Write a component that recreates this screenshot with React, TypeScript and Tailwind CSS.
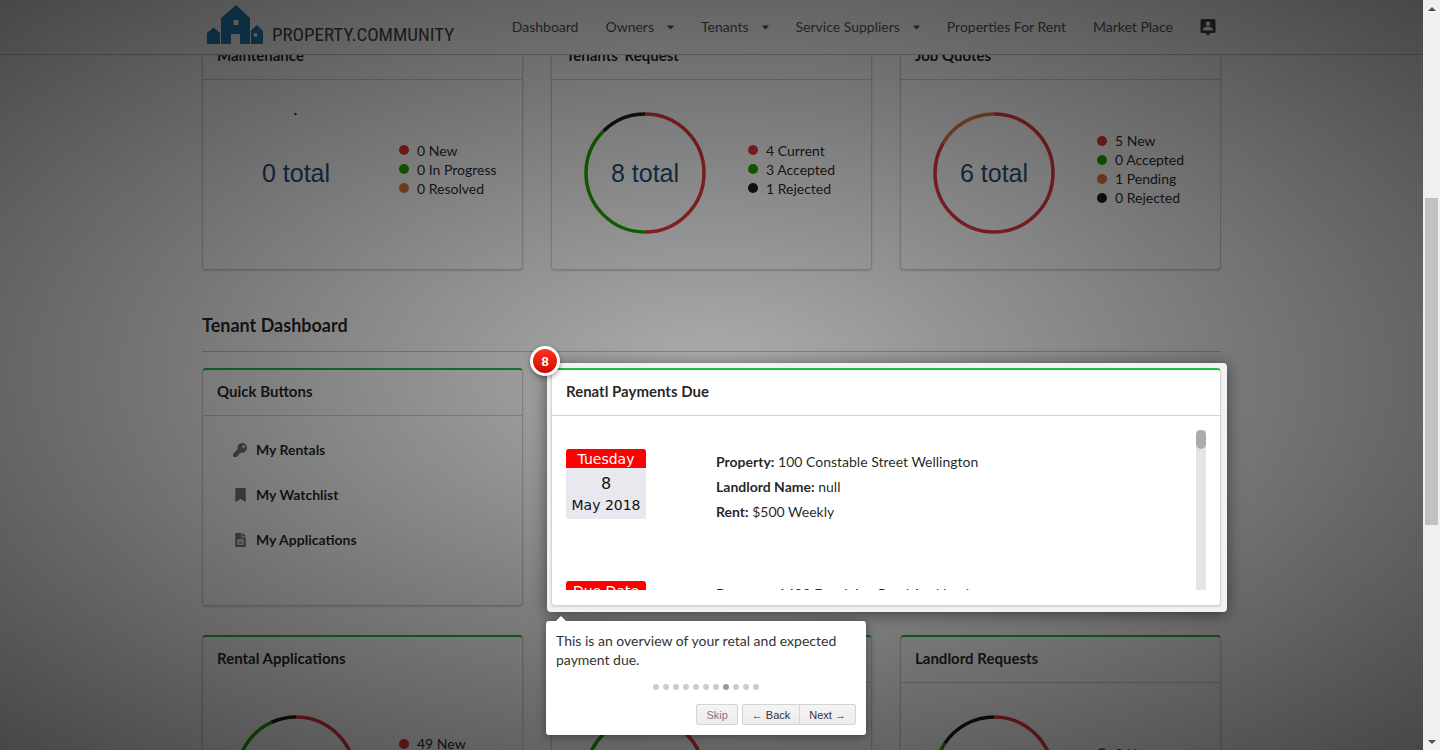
import React from "react";
import { FaKey, FaBookmark, FaCaretDown } from "react-icons/fa";

type Segment = { value: number; color: string };
type LegendItem = { count: number; label: string; color: string };

const RED = "#e0373c";
const GREEN = "#21a300";
const ORANGE = "#d87a3c";
const BLACK = "#1b1c1d";

function Logo() {
  return (
    <a href="#" className="flex items-end gap-2" aria-label="Property Community">
      <svg width="57" height="39" viewBox="0 0 57 39" fill="#2380b8" aria-hidden="true">
        <path
          fillRule="evenodd"
          d="M29 0 14 13v26h10V29h9v10h10V13zM26.500 15v5h5v-5z"
        />
        <path d="M6.500 22.500 0 28v10q0 1 1 1h12V28z" />
        <path fillRule="evenodd" d="M50 20l-6 5.500V39h11q1 0 1-1V26zM48.500 28a2 2 0 1 0 .01 0z" />
      </svg>
      <span className="font-['Liberation_Sans_Narrow','Roboto_Condensed','Liberation_Sans',sans-serif] text-[19px] leading-[18px] text-[#444]">
        PROPERTY.COMMUNITY
      </span>
    </a>
  );
}

const NAV = [
  { label: "Dashboard", menu: false },
  { label: "Owners", menu: true },
  { label: "Tenants", menu: true },
  { label: "Service Suppliers", menu: true },
  { label: "Properties For Rent", menu: false },
  { label: "Market Place", menu: false },
];

function Header() {
  return (
    <header className="absolute inset-x-0 top-0 z-10 h-[55px] border-b border-[#c8c8c9] bg-white">
      <div className="mx-auto flex h-full max-w-[1019px] items-center pl-[5px]">
        <div className="pb-[5px]">
          <Logo />
        </div>
        <nav className="ml-auto flex items-center gap-[27px] pr-[5px] text-[14px] leading-[18px] text-[#555]">
          {NAV.map((item) => (
            <a key={item.label} href="#" className="flex items-center gap-[13px] whitespace-nowrap">
              {item.label}
              {item.menu && <FaCaretDown className="h-3 w-[7px]" />}
            </a>
          ))}
          <button type="button" aria-label="Account" className="text-[#444]">
            <svg width="16" height="18" viewBox="0 0 16 18" fill="currentColor">
              <path
                fillRule="evenodd"
                d="M2 1h12a1.500 1.500 0 0 1 1.500 1.500v11A1.500 1.500 0 0 1 14 15h-3.500L8 17.500 5.500 15H2A1.500 1.500 0 0 1 .500 13.500v-11A1.500 1.500 0 0 1 2 1zM8 3.500a2.300 2.300 0 1 0 .01 0zM3 11.500V12.500h10v-1c0-2-3.300-3-5-3s-5 1-5 3z"
              />
            </svg>
          </button>
        </nav>
      </div>
    </header>
  );
}

function Card({
  title,
  divider = true,
  children,
}: {
  title: string;
  divider?: boolean;
  children: React.ReactNode;
}) {
  return (
    <section className="rounded-[4px] border border-t-2 border-[#d4d4d5] border-t-[#21ba45] bg-white shadow-[0_1px_2px_0_#d4d4d5]">
      <h3
        className={
          "border-b px-[14px] pb-[14px] pt-[11px] text-[15px] font-bold leading-5 " +
          (divider ? "border-[#d4d4d5]" : "border-transparent")
        }
      >
        {title}
      </h3>
      <div className="h-[189px]">{children}</div>
    </section>
  );
}

function Ring({ total, segments }: { total: number; segments: Segment[] }) {
  const r = 59;
  const length = 2 * Math.PI * r;
  const sum = segments.reduce((a, s) => a + s.value, 0);
  let start = 0;
  return (
    <div className="grid h-[122px] w-[122px] shrink-0 place-items-center">
      <svg width="122" height="122" viewBox="0 0 122 122" fill="none" className="col-start-1 row-start-1" aria-hidden="true">
        {sum === 0 && <circle cx="60.500" cy="2" r="1.2" fill="#333" />}
        {segments.map((s) => {
          const part = (s.value / sum) * length;
          const offset = -start;
          start += part;
          return (
            <circle
              key={s.color}
              cx="61"
              cy="61"
              r={r}
              stroke={s.color}
              strokeWidth="3.5"
              strokeDasharray={`${part} ${length - part}`}
              strokeDashoffset={offset}
              transform="rotate(-90 61 61)"
            />
          );
        })}
      </svg>
      <span className="col-start-1 row-start-1 font-['Liberation_Sans',sans-serif] text-[25px] leading-8 text-[#1f4e79]">
        {total} total
      </span>
    </div>
  );
}

function StatCard({
  title,
  total,
  segments,
  legend,
  divider,
}: {
  title: string;
  total: number;
  segments: Segment[];
  legend: LegendItem[];
  divider?: boolean;
}) {
  return (
    <Card title={title} divider={divider}>
      <div className="flex h-full items-center gap-[42px] pb-[3px] pl-8">
        <Ring total={total} segments={segments} />
        <ul className="mb-2 text-[14px] leading-[19px]">
          {legend.map((item) => (
            <li key={item.label} className="flex items-center gap-2 whitespace-nowrap">
              <span className="h-[10px] w-[10px] rounded-full" style={{ backgroundColor: item.color }} />
              {item.count} {item.label}
            </li>
          ))}
        </ul>
      </div>
    </Card>
  );
}

function FileIcon() {
  return (
    <svg width="11" height="14" viewBox="0 0 384 512" fill="currentColor" aria-hidden="true">
      <path
        fillRule="evenodd"
        d="M224 136V0H24C10.700 0 0 10.700 0 24v464c0 13.300 10.700 24 24 24h336c13.300 0 24-10.700 24-24V160H248c-13.200 0-24-10.800-24-24zM80 230h224v200H80zM120 270v40h144v-40zM120 350v40h144v-40zM256 0v128h128v-6c0-6-2.500-12-7-17L279 7c-4.500-4.500-10.600-7-17-7z"
      />
    </svg>
  );
}

function QuickButtons() {
  const items = [
    { label: "My Rentals", icon: <FaKey className="h-[14px] w-[14px]" /> },
    { label: "My Watchlist", icon: <FaBookmark className="h-[14px] w-[11px]" /> },
    { label: "My Applications", icon: <FileIcon /> },
  ];
  return (
    <Card title="Quick Buttons">
      <div className="flex flex-col items-start gap-[25px] px-[29px] pt-6">
        {items.map((item) => (
          <button key={item.label} type="button" className="flex items-center gap-2 text-[14px] font-bold leading-5">
            <span className="flex w-4 justify-center text-[#777]">{item.icon}</span>
            {item.label}
          </button>
        ))}
      </div>
    </Card>
  );
}

function Payment({
  heading,
  day,
  month,
  property,
  landlord,
  rent,
}: {
  heading: string;
  day: string;
  month: string;
  property: string;
  landlord: string;
  rent: string;
}) {
  return (
    <article className="flex h-[132px] gap-[70px] pt-[19px]">
      <div className="h-[70px] w-20 shrink-0 overflow-hidden rounded-[3px] bg-[#e8e9ee] text-center font-['DejaVu_Sans',sans-serif] text-[14px] text-[#111]">
        <p className="bg-[#fe0000] pt-px leading-[18px] text-white">{heading}</p>
        <p className="pt-1 text-[16px] leading-6">{day}</p>
        <p className="leading-[18px]">{month}</p>
      </div>
      <div className="text-[14px] leading-[25px]">
        <p>
          <b>Property:</b> {property}
        </p>
        <p>
          <b>Landlord Name:</b> {landlord}
        </p>
        <p>
          <b>Rent:</b> {rent}
        </p>
      </div>
    </article>
  );
}

function PaymentsDue() {
  return (
    <Card title="Renatl Payments Due">
      <div className="p-[14px]">
        <div className="flex h-[160px] justify-between overflow-hidden">
          <div>
            <Payment
              heading="Tuesday"
              day="8"
              month="May 2018"
              property="100 Constable Street Wellington"
              landlord="null"
              rent="$500 Weekly"
            />
            <Payment
              heading="Due Date"
              day="9"
              month="May 2018"
              property="1400 Dominion Road Auckland"
              landlord="null"
              rent="$450 Weekly"
            />
          </div>
          <div className="w-[10px] bg-[#e4e4e4]">
            <div className="h-[19px] rounded-[5px] bg-[#ababab]" />
          </div>
        </div>
      </div>
    </Card>
  );
}

const TOUR_BUTTON =
  "h-[21px] border border-[#d4d4d4] bg-linear-to-b from-[#f4f4f4] to-[#ececec] px-[9px] text-[11px] leading-[18px]";

function TourTooltip() {
  const steps = Array.from({ length: 11 }, (_, i) => i + 1);
  return (
    <div
      role="dialog"
      aria-label="Tour"
      className="absolute -left-[5px] top-[253px] w-[320px] rounded-[3px] bg-white p-[10px] shadow-[0_1px_10px_rgba(0,0,0,0.4)]"
    >
      <div className="absolute -top-[5px] left-[10px] h-0 w-0 border-x-[5px] border-b-[5px] border-x-transparent border-b-white" />
      <p className="text-[14px] leading-[19px] text-[#333]">
        This is an overview of your retal and expected payment due.
      </p>
      <ul className="mt-[15px] flex justify-center gap-1">
        {steps.map((n) => (
          <li key={n} className={"h-[6px] w-[6px] rounded-full " + (n === 8 ? "bg-[#999]" : "bg-[#ccc]")} />
        ))}
      </ul>
      <div className="mt-[14px] flex justify-end gap-1 font-['Liberation_Sans',sans-serif]">
        <button type="button" className={TOUR_BUTTON + " rounded-[2px] text-[#7a7a7a]"}>
          Skip
        </button>
        <div className="flex">
          <button type="button" className={TOUR_BUTTON + " rounded-l-[2px] text-[#333]"}>
            ← Back
          </button>
          <button type="button" className={TOUR_BUTTON + " -ml-px rounded-r-[2px] text-[#333]"}>
            Next →
          </button>
        </div>
      </div>
    </div>
  );
}

function PageScrollbar() {
  return (
    <div className="flex w-[17px] shrink-0 flex-col items-center bg-[#f0f0f0]" aria-hidden="true">
      <div className="flex h-[17px] items-center">
        <div className="h-0 w-0 border-x-4 border-b-4 border-x-transparent border-b-[#505050]" />
      </div>
      <div className="grow-[181]" />
      <div className="w-[13px] grow-[327] bg-[#c1c1c1]" />
      <div className="grow-[208]" />
      <div className="flex h-[17px] items-center">
        <div className="h-0 w-0 border-x-4 border-t-4 border-x-transparent border-t-[#505050]" />
      </div>
    </div>
  );
}

export default function App() {
  return (
    <div className="flex h-screen overflow-hidden bg-white font-['Lato',sans-serif] text-[rgba(0,0,0,0.87)]">
      <div className="relative min-w-0 flex-1 overflow-hidden">
        <Header />

        <main className="mx-auto max-w-[1019px] pt-8">
          <div className="grid grid-cols-3 gap-7">
            <StatCard
              title="Maintenance"
              total={0}
              segments={[]}
              legend={[
                { count: 0, label: "New", color: RED },
                { count: 0, label: "In Progress", color: GREEN },
                { count: 0, label: "Resolved", color: ORANGE },
              ]}
            />
            <StatCard
              title="Tenants' Request"
              total={8}
              segments={[
                { value: 4, color: RED },
                { value: 3, color: GREEN },
                { value: 1, color: BLACK },
              ]}
              legend={[
                { count: 4, label: "Current", color: RED },
                { count: 3, label: "Accepted", color: GREEN },
                { count: 1, label: "Rejected", color: BLACK },
              ]}
            />
            <StatCard
              title="Job Quotes"
              total={6}
              segments={[
                { value: 5, color: RED },
                { value: 1, color: ORANGE },
              ]}
              legend={[
                { count: 5, label: "New", color: RED },
                { count: 0, label: "Accepted", color: GREEN },
                { count: 1, label: "Pending", color: ORANGE },
                { count: 0, label: "Rejected", color: BLACK },
              ]}
            />
          </div>

          <h2 className="mb-4 mt-[42px] border-b border-[#c8c8c9] pb-[13px] text-[18px] font-bold leading-[26px]">
            Tenant Dashboard
          </h2>

          <div className="grid grid-cols-3 gap-x-7 gap-y-[29px]">
            <QuickButtons />
            <div className="relative z-30 col-span-2">
              <div className="absolute -bottom-[6px] -left-1 -right-[6px] -top-[5px] rounded-[4px] bg-[#f2f2f2] shadow-[0_2px_15px_rgba(0,0,0,0.5)]" />
              <div className="relative">
                <PaymentsDue />
              </div>
              <div className="absolute -left-[21px] -top-[22px] flex h-[30px] w-[30px] items-center justify-center rounded-full border-[3px] border-white bg-linear-to-b from-[#ff3019] to-[#cf0404] font-['Liberation_Sans',sans-serif] text-[13px] font-bold leading-none text-white shadow-[0_2px_5px_rgba(0,0,0,0.4)]">
                8
              </div>
              <TourTooltip />
            </div>
            <StatCard
              title="Rental Applications"
              divider={false}
              total={100}
              segments={[
                { value: 49, color: RED },
                { value: 44, color: GREEN },
                { value: 7, color: BLACK },
              ]}
              legend={[
                { count: 49, label: "New", color: RED },
                { count: 44, label: "Accepted", color: GREEN },
                { count: 0, label: "Pending", color: ORANGE },
                { count: 7, label: "Rejected", color: BLACK },
              ]}
            />
            <StatCard
              title="Inspections"
              total={2}
              segments={[
                { value: 1, color: RED },
                { value: 1, color: GREEN },
              ]}
              legend={[
                { count: 1, label: "New", color: RED },
                { count: 1, label: "Accepted", color: GREEN },
              ]}
            />
            <StatCard
              title="Landlord Requests"
              total={19}
              segments={[
                { value: 9, color: RED },
                { value: 7, color: GREEN },
                { value: 3, color: BLACK },
              ]}
              legend={[
                { count: 9, label: "New", color: RED },
                { count: 7, label: "Accepted", color: GREEN },
                { count: 3, label: "Rejected", color: BLACK },
              ]}
            />
          </div>
        </main>

        <div className="pointer-events-none absolute inset-0 z-20 bg-[radial-gradient(ellipse_at_center,rgba(0,0,0,0.4)_0%,rgba(0,0,0,0.9)_100%)] opacity-80" />
      </div>
      <PageScrollbar />
    </div>
  );
}
